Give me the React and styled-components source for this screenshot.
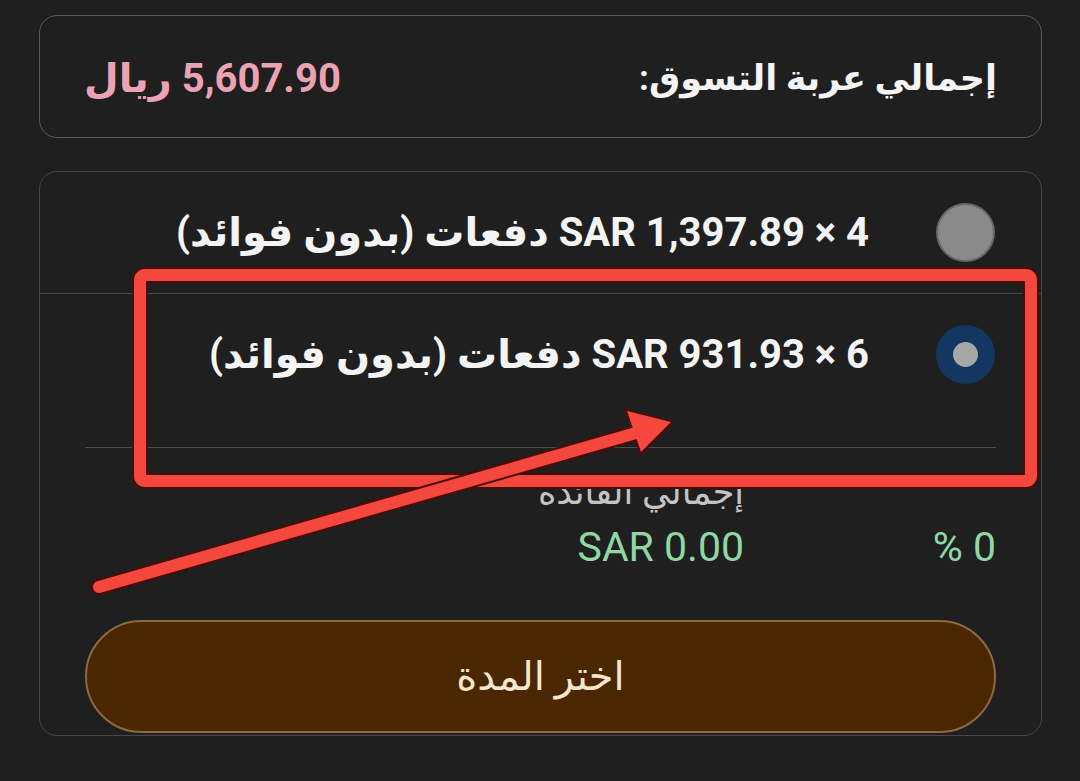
import React from "react";
import styled, { createGlobalStyle } from "styled-components";

const GlobalStyle = createGlobalStyle`
  html, body {
    margin: 0;
    padding: 0;
    background: #1f1f1f;
  }
  body {
    font-family: Roboto, "DejaVu Sans", sans-serif;
    color: #f2f2f2;
  }
`;

const Page = styled.div`
  position: relative;
  width: 1080px;
  height: 781px;
  box-sizing: border-box;
  padding: 15px 38px 0 39px;
  direction: rtl;
  overflow: hidden;
  background: #1f1f1f;
`;

const SummaryCard = styled.div`
  height: 123px;
  box-sizing: border-box;
  border: 1.5px solid #5a5a5a;
  border-radius: 18px;
  display: flex;
  align-items: center;
  justify-content: space-between;
  padding: 4px 44px 0;
`;

const SummaryTitle = styled.span`
  font-size: 35px;
  font-weight: 700;
  color: #f4f4f4;
`;

const SummaryPrice = styled.span`
  font-size: 40px;
  font-weight: 700;
  color: #eba3b3;
`;

const PlanCard = styled.div`
  margin-top: 33px;
  height: 565px;
  box-sizing: border-box;
  border: 1.5px solid #474747;
  border-radius: 18px;
  padding-bottom: 2px;
  display: flex;
  flex-direction: column;
`;

const OptionRow = styled.div`
  display: flex;
  align-items: flex-start;
  gap: 67px;
  padding: 31px 46px ${(props) => (props.$selected ? "63px" : "31px")};
  border-bottom: ${(props) => (props.$divider ? "1.5px solid #474747" : "none")};
`;

const Radio = styled.span`
  flex: none;
  width: 59px;
  height: 59px;
  box-sizing: border-box;
  border-radius: 50%;
  display: flex;
  align-items: center;
  justify-content: center;
  background: ${(props) => (props.$checked ? "#143761" : "#8a8a8a")};
  border: 2px solid ${(props) => (props.$checked ? "#143761" : "#666")};
`;

const RadioDot = styled.span`
  width: 25px;
  height: 25px;
  border-radius: 50%;
  background: #a7a7a7;
`;

const OptionLabel = styled.span`
  font-size: 40px;
  font-weight: 700;
  line-height: 59px;
  color: #f4f4f4;
  white-space: nowrap;
`;

const Details = styled.div`
  margin: 0 45px;
  border-top: 1.5px solid #4d4d4d;
  padding-top: 25px;
  display: grid;
  grid-template-columns: 252px auto;
  grid-template-rows: 40px 40px;
  row-gap: 14px;
  justify-content: start;
`;

const DetailLabel = styled.span`
  grid-column: 2;
  grid-row: 1;
  font-size: 35px;
  line-height: 40px;
  color: #c4c4c4;
`;

const GreenValue = styled.span`
  grid-column: ${(props) => props.$col};
  grid-row: 2;
  font-size: 41px;
  line-height: 40px;
  color: #8fd8a6;
`;

const ChooseButton = styled.button`
  margin: auto 45px 0;
  height: 113px;
  border-radius: 57px;
  border: 2px solid #8c6a40;
  background: #4a2700;
  color: #f5e6cf;
  font-family: Roboto, "DejaVu Sans", sans-serif;
  font-size: 40px;
  cursor: pointer;
`;

const Annotation = styled.svg`
  position: absolute;
  top: 0;
  left: 0;
  pointer-events: none;
`;

const plans = [
  { id: 4, label: "4 × SAR 1,397.89 دفعات (بدون فوائد)" },
  { id: 6, label: "6 × SAR 931.93 دفعات (بدون فوائد)" },
];

export default function App() {
  const selected = 6;

  return (
    <>
      <GlobalStyle />
      <Page>
        <SummaryCard>
          <SummaryTitle>إجمالي عربة التسوق:</SummaryTitle>
          <SummaryPrice>5,607.90 ريال</SummaryPrice>
        </SummaryCard>

        <PlanCard>
          {plans.map((plan, i) => (
            <OptionRow
              key={plan.id}
              $selected={plan.id === selected}
              $divider={i === 0}
            >
              <Radio $checked={plan.id === selected}>
                {plan.id === selected && <RadioDot />}
              </Radio>
              <OptionLabel>{plan.label}</OptionLabel>
            </OptionRow>
          ))}

          <Details>
            <DetailLabel>إجمالي الفائدة</DetailLabel>
            <GreenValue $col={1}>0 %</GreenValue>
            <GreenValue $col={2}>SAR 0.00</GreenValue>
          </Details>

          <ChooseButton>اختر المدة</ChooseButton>
        </PlanCard>

        <Annotation width="1080" height="781" viewBox="0 0 1080 781">
          <rect
            x="140"
            y="275"
            width="891"
            height="206"
            rx="5"
            fill="none"
            stroke="#4a0c08"
            strokeWidth="16"
          />
          <rect
            x="140"
            y="275"
            width="891"
            height="206"
            rx="5"
            fill="none"
            stroke="#f4473d"
            strokeWidth="12"
          />
          <line
            x1="99"
            y1="587"
            x2="636"
            y2="433"
            stroke="#4a0c08"
            strokeWidth="16"
            strokeLinecap="round"
          />
          <polygon points="624,408 675,422 640,456" fill="#4a0c08" />
          <line
            x1="99"
            y1="587"
            x2="636"
            y2="433"
            stroke="#f4473d"
            strokeWidth="12"
            strokeLinecap="round"
          />
          <polygon points="627,411 671,422 641,452" fill="#f4473d" />
        </Annotation>
      </Page>
    </>
  );
}
